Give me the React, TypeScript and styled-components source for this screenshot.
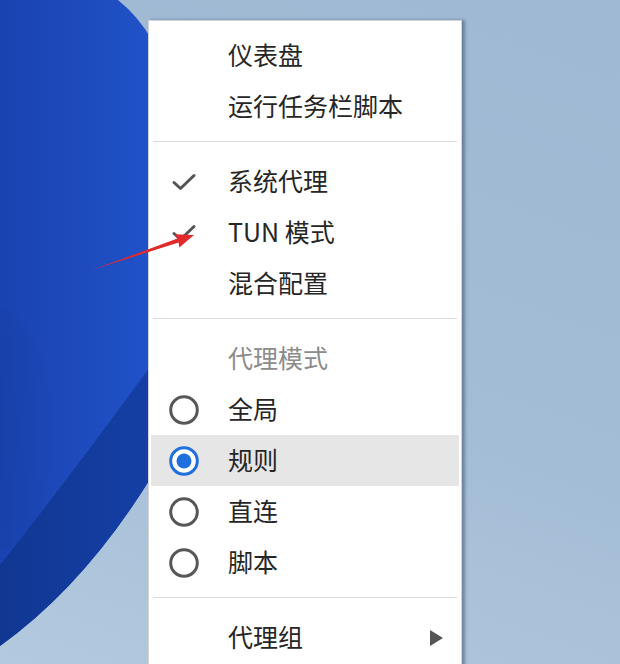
import React from "react";
import styled, { createGlobalStyle } from "styled-components";

const Global = createGlobalStyle`
  html, body { margin: 0; padding: 0; }
  body { font-family: "Noto Sans CJK SC", "Noto Sans", sans-serif; }
  * { box-sizing: border-box; }
`;

const Desktop = styled.div`
  position: relative;
  width: 620px;
  height: 664px;
  overflow: hidden;
  padding: 20px 0 0 148px;
  background: linear-gradient(200deg, #9fb8d3 0%, #a4bdd6 55%, #b2c9de 100%);
`;

const Wallpaper = styled.svg`
  position: absolute;
  inset: 0;
  z-index: 0;
`;

const Annotation = styled.svg`
  position: absolute;
  inset: 0;
  z-index: 2;
  pointer-events: none;
`;

const Menu = styled.div`
  position: relative;
  z-index: 1;
  width: 314px;
  height: 700px;
  background: #ffffff;
  border: 1px solid #d4d4d4;
  box-shadow: 3px 0 3px rgba(40, 60, 90, 0.45);
  padding-top: 9px;
  display: flex;
  flex-direction: column;
`;

const Item = styled.div<{ $active?: boolean; $header?: boolean }>`
  display: grid;
  grid-template-columns: 77px 1fr 40px;
  align-items: center;
  height: 51px;
  padding-bottom: 3px;
  margin: 0 2px;
  background: ${(p) => (p.$active ? "#e6e6e6" : "transparent")};
  color: ${(p) => (p.$header ? "#8c8c8c" : "#262626")};
  font-size: 25px;
  line-height: 1;
`;

const IconCell = styled.div`
  display: flex;
  align-items: center;
  justify-content: center;
  width: 30px;
  height: 30px;
  margin-left: 18px;
  margin-top: 3px;
`;

const Label = styled.span`
  white-space: nowrap;
`;

const Trail = styled.div`
  display: flex;
  justify-content: flex-end;
  padding-right: 16px;
  margin-top: 3px;
`;

const Separator = styled.div`
  height: 1px;
  margin: 9px 4px 14px;
  background: #dcdcdc;
`;

const Check = () => (
  <svg width="26" height="20" viewBox="0 0 26 20">
    <path d="M3 10.5 L9.5 16.5 L23 3.5" fill="none" stroke="#555" strokeWidth="3" strokeLinecap="round" strokeLinejoin="round" />
  </svg>
);

const Radio = ({ on }: { on?: boolean }) => (
  <svg width="30" height="30" viewBox="0 0 30 30">
    {on ? (
      <>
        <circle cx="15" cy="15" r="13.3" fill="#fff" stroke="#1f6fdf" strokeWidth="3" />
        <circle cx="15" cy="15" r="7.5" fill="#1f6fdf" />
      </>
    ) : (
      <circle cx="15" cy="15" r="13.3" fill="none" stroke="#575757" strokeWidth="3" />
    )}
  </svg>
);

const SubArrow = () => (
  <svg width="13" height="16" viewBox="0 0 13 16">
    <path d="M0 0 L13 8 L0 16 Z" fill="#555" />
  </svg>
);

type Row = {
  label: string;
  icon?: "check" | "radio" | "radioOn";
  active?: boolean;
  header?: boolean;
  sub?: boolean;
};

const sections: Row[][] = [
  [{ label: "仪表盘" }, { label: "运行任务栏脚本" }],
  [
    { label: "系统代理", icon: "check" },
    { label: "TUN 模式", icon: "check" },
    { label: "混合配置" },
  ],
  [
    { label: "代理模式", header: true },
    { label: "全局", icon: "radio" },
    { label: "规则", icon: "radioOn", active: true },
    { label: "直连", icon: "radio" },
    { label: "脚本", icon: "radio" },
  ],
  [{ label: "代理组", sub: true }],
];

const renderIcon = (icon?: Row["icon"]) => {
  if (icon === "check") return <Check />;
  if (icon === "radio") return <Radio />;
  if (icon === "radioOn") return <Radio on />;
  return null;
};

export default function App() {
  return (
    <>
      <Global />
      <Desktop>
        <Wallpaper width="620" height="664" viewBox="0 0 620 664">
          <defs>
            <linearGradient id="bloom" x1="0" y1="0" x2="1" y2="0">
              <stop offset="0" stopColor="#1943b0" />
              <stop offset="1" stopColor="#2152c9" />
            </linearGradient>
            <linearGradient id="band" x1="0" y1="0" x2="1" y2="0">
              <stop offset="0" stopColor="#113792" />
              <stop offset="1" stopColor="#153fa6" />
            </linearGradient>
            <radialGradient id="shade" cx="0" cy="0.5" r="1">
              <stop offset="0" stopColor="#163c98" stopOpacity="0.7" />
              <stop offset="1" stopColor="#163c98" stopOpacity="0" />
            </radialGradient>
          </defs>
          <path d="M0 0 L118 0 Q 138 16 152 40 L152 476 Q 85 585 0 646 Z" fill="url(#bloom)" />
          <ellipse cx="0" cy="430" rx="55" ry="120" fill="url(#shade)" />
          <path d="M152 364 Q 75 470 0 565 L0 646 Q 85 585 152 476 Z" fill="url(#band)" />
        </Wallpaper>
        <Menu>
          {sections.map((rows, si) => (
            <React.Fragment key={si}>
              {si > 0 && <Separator />}
              {rows.map((r) => (
                <Item key={r.label} $active={r.active} $header={r.header}>
                  <IconCell>{renderIcon(r.icon)}</IconCell>
                  <Label>{r.label}</Label>
                  <Trail>{r.sub && <SubArrow />}</Trail>
                </Item>
              ))}
            </React.Fragment>
          ))}
        </Menu>
        <Annotation width="620" height="664" viewBox="0 0 620 664">
          <polygon
            points="92,270 177.4,238.6 174.7,234.3 194,235 179.3,247.5 178.6,242.4"
            fill="#e2292b"
          />
        </Annotation>
      </Desktop>
    </>
  );
}
